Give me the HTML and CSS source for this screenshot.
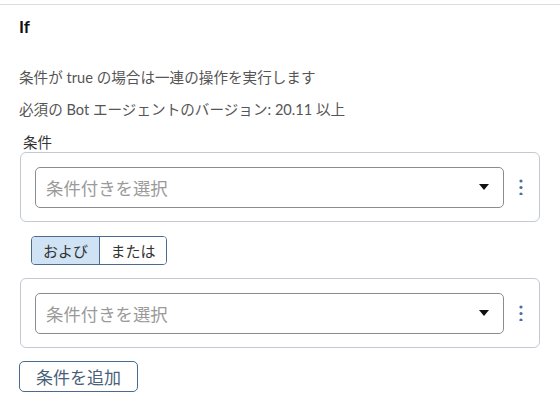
FILE: index.html
```html
<!DOCTYPE html>
<html lang="ja">
<head>
<meta charset="utf-8">
<link rel="stylesheet" href="styles.css">
</head>
<body>
<div class="panel">
  <h2 class="title">If</h2>
  <p class="desc">条件が true の場合は一連の操作を実行します</p>
  <p class="desc">必須の Bot エージェントのバージョン: 20.11 以上</p>
  <div class="label">条件</div>
  <div class="card">
    <div class="select">
      <span class="placeholder">条件付きを選択</span>
      <svg class="caret" width="10" height="6" viewBox="0 0 10 6"><path d="M0 0H10L5 6Z" fill="#111"/></svg>
    </div>
    <svg class="kebab" width="4" height="16" viewBox="0 0 4 16"><circle cx="2" cy="2" r="1.6" fill="#4b6e9c"/><circle cx="2" cy="8.5" r="1.6" fill="#4b6e9c"/><circle cx="2" cy="15" r="1.6" fill="#4b6e9c"/></svg>
  </div>
  <div class="toggle">
    <button class="seg active">および</button>
    <button class="seg">または</button>
  </div>
  <div class="card">
    <div class="select">
      <span class="placeholder">条件付きを選択</span>
      <svg class="caret" width="10" height="6" viewBox="0 0 10 6"><path d="M0 0H10L5 6Z" fill="#111"/></svg>
    </div>
    <svg class="kebab" width="4" height="16" viewBox="0 0 4 16"><circle cx="2" cy="2" r="1.6" fill="#4b6e9c"/><circle cx="2" cy="8.5" r="1.6" fill="#4b6e9c"/><circle cx="2" cy="15" r="1.6" fill="#4b6e9c"/></svg>
  </div>
  <button class="add">条件を追加</button>
</div>
</body>
</html>
```
FILE: styles.css
```css
* { box-sizing: border-box; }
html, body { margin: 0; background: #fff; }
body {
  font-family: "Lato", "Noto Sans CJK JP", sans-serif;
  color: #444;
  padding-top: 4px;
}
.panel {
  border-top: 1px solid #dcdcdc;
  padding: 0 20px 0 19px;
}
.title {
  margin: 12px 0 0 0;
  font-size: 17px;
  line-height: 20px;
  font-weight: 700;
  color: #111;
}
.desc {
  margin: 0;
  font-size: 14.6px;
  line-height: 20px;
  color: #555;
}
.title + .desc { margin-top: 31px; }
.desc + .desc { margin-top: 12px; }
.label {
  margin: 13px 0 0 4px;
  font-size: 14.5px;
  line-height: 19px;
  color: #333;
}
.card {
  margin-left: 1px;
  display: flex;
  align-items: center;
  border: 1px solid #c3cad1;
  border-radius: 6px;
  padding: 14px 14px 14px 14px;
  height: 70px;
}
.select {
  flex: 1;
  height: 41px;
  border: 1px solid #8c8c8c;
  border-radius: 5px;
  display: flex;
  align-items: center;
  padding: 0 14px 0 10px;
}
.placeholder {
  flex: 1;
  font-size: 17.4px;
  color: #9a9a9a;
}
.caret { display: block; }
.kebab { margin-left: 15px; margin-right: 2px; display: block; }
.toggle {
  display: inline-flex;
  margin: 14px 0 13px 12px;
  border: 1px solid #4a6a8e;
  border-radius: 4px;
  overflow: hidden;
  height: 29px;
}
.seg {
  font-family: inherit;
  font-size: 15px;
  color: #333;
  background: #fff;
  border: 0;
  padding: 0;
  margin: 0;
  width: 67px;
  white-space: nowrap;
}
.seg + .seg { border-left: 1px solid #4a6a8e; }
.seg.active { background: #cfe3f4; }
.add {
  display: block;
  margin-top: 13px;
  font-family: inherit;
  font-size: 17px;
  color: #4a5f7a;
  background: #fff;
  border: 1px solid #4a6a8e;
  border-radius: 5px;
  height: 31px;
  width: 119px;
  padding: 0;
}
```
